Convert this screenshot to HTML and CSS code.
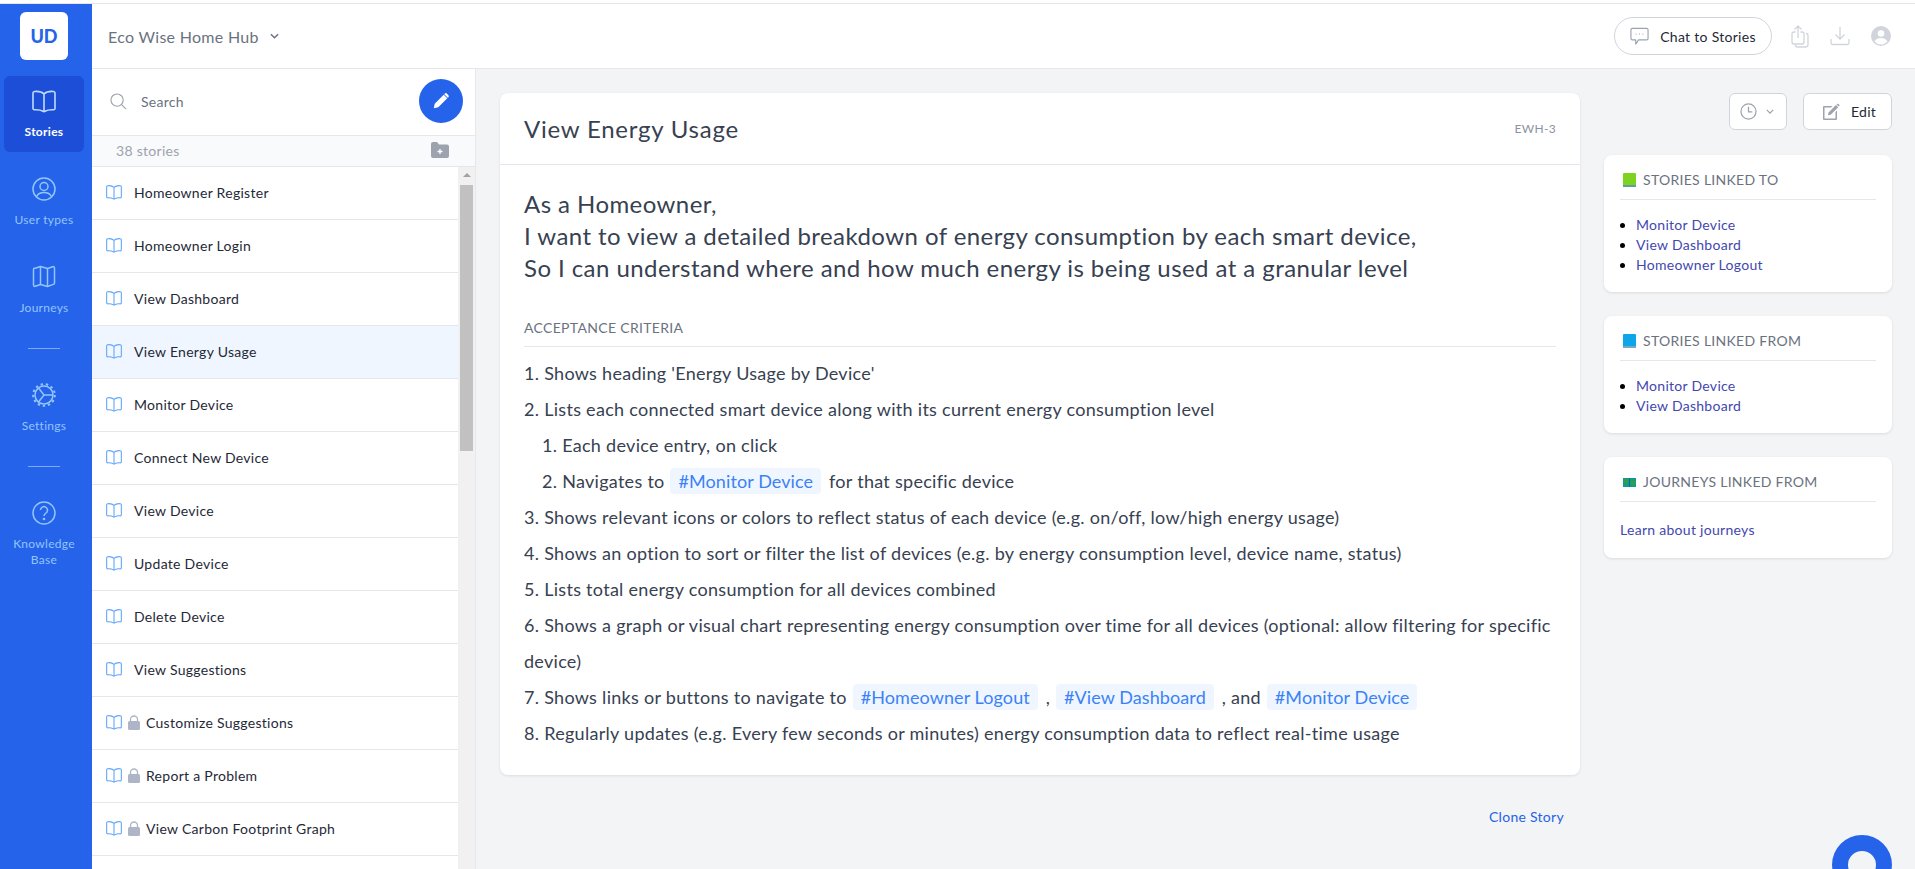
FILE: index.html
```
<!DOCTYPE html>
<html lang="en">
<head>
    <meta charset="UTF-8">
    <meta name="viewport" content="width=device-width, initial-scale=1.0">
    <title>View Energy Usage</title>
    <link rel="stylesheet" href="styles.css">
</head>
<body>
    <svg class="defs" width="0" height="0">
        <symbol id="book" viewBox="0 0 24 24">
            <path d="M12 5C10 3 6 2.200 2.500 2.500 1.600 2.600 1 3.200 1 4v15.500c0 .8.600 1.300 1.500 1.300 3.500-.2 6.500.300 8.500 1.500.6.400 1.400.400 2 0 2-1.200 5-1.700 8.500-1.500.9 0 1.500-.5 1.500-1.300V4c0-.8-.6-1.400-1.500-1.500C18 2.200 14 3 12 5zM12 5v17" fill="none" stroke="currentColor" stroke-width="1.600" stroke-linejoin="round"/>
        </symbol>
    </svg>
    <div class="top-strip"></div>
    <div class="app">
        <!-- rail -->
        <nav class="rail">
            <div class="logo">UD</div>
            <a class="rail-item active">
                <svg class="rail-icon"><use href="#book"/></svg>
                <span>Stories</span>
            </a>
            <a class="rail-item">
                <svg class="rail-icon" viewBox="0 0 24 24" fill="none" stroke="currentColor" stroke-width="1.500"><circle cx="12" cy="12" r="11"/><circle cx="12" cy="9.500" r="4"/><path d="M4.500 19.500c1.500-3 4.500-4 7.500-4s6 1 7.500 4"/></svg>
                <span>User types</span>
            </a>
            <a class="rail-item">
                <svg class="rail-icon" viewBox="0 0 24 24" fill="none" stroke="currentColor" stroke-width="1.500" stroke-linejoin="round"><path d="M1.500 4.500c0-1 .8-1.500 1.700-1.200L8.500 1.500 15.500 3.500l5.300-1.800c.9-.3 1.700.2 1.700 1.200v15c0 .8-.5 1.300-1.200 1.500l-5.800 2.100-7-2-5.300 1.800c-.9.300-1.700-.2-1.700-1.200z"/><path d="M8.500 1.500v18.500M15.500 3.500v18.300"/></svg>
                <span>Journeys</span>
            </a>
            <div class="rail-divider"></div>
            <a class="rail-item">
                <svg class="rail-icon" viewBox="0 0 24 24" fill="none" stroke="currentColor"><circle cx="12" cy="12" r="10.800" stroke-width="2" stroke-dasharray="2.400 2.840"/><circle cx="12" cy="12" r="9" stroke-width="1.500"/><path d="M6.500 5l5.500 7-5.500 7M12 12h9" stroke-width="1.500"/></svg>
                <span>Settings</span>
            </a>
            <div class="rail-divider"></div>
            <a class="rail-item">
                <svg class="rail-icon" viewBox="0 0 24 24" fill="none" stroke="currentColor" stroke-width="1.500"><circle cx="12" cy="12" r="11"/><path d="M8.500 9a3.500 3.500 0 1 1 5.500 3c-1.300.9-2 1.500-2 3"/><circle cx="12" cy="18" r=".6"/></svg>
                <span>Knowledge<br>Base</span>
            </a>
        </nav>

        <div class="page">
            <header class="topbar">
                <div class="project">
                    Eco Wise Home Hub
                    <svg class="chev" viewBox="0 0 10 6" fill="none" stroke="currentColor" stroke-width="1.600"><path d="M1 1l4 4 4-4"/></svg>
                </div>
                <div class="topbar-right">
                    <button class="chat-btn" type="button">
                        <svg viewBox="0 0 20 20" fill="none" stroke="#9ca3af" stroke-width="1.200" stroke-linejoin="round"><path d="M2.500 1.500h15a1.500 1.500 0 0 1 1.500 1.500v9a1.500 1.500 0 0 1-1.500 1.500H9l-3 4.500v-4.500H2.500A1.500 1.500 0 0 1 1 12V3a1.500 1.500 0 0 1 1.500-1.500z"/><path d="M6 7.500h.8M9.600 7.500h.8M13.200 7.500h.8" stroke-width="1.400"/></svg>
                        Chat to Stories
                    </button>
                    <svg class="bar-icon share" viewBox="0 0 18 23" fill="none" stroke="#d1d5db" stroke-width="1.300" stroke-linejoin="round"><path d="M4.500 7H3a2 2 0 0 0-2 2v8a2 2 0 0 0 2 2h8a2 2 0 0 0 2-2V9a2 2 0 0 0-2-2H9.500M7 1v12M3.500 4.500L7 1l3.500 3.500"/><path d="M15 8.500a2 2 0 0 1 2 2v9a2.500 2.500 0 0 1-2.500 2.500h-8a2 2 0 0 1-2-2"/></svg>
                    <svg class="bar-icon download" viewBox="0 0 20 20" fill="none" stroke="#d1d5db" stroke-width="1.300"><path d="M10 1v12M5.500 8.500L10 13l4.500-4.500M1 13v4a1.500 1.500 0 0 0 1.500 1.500h15A1.500 1.500 0 0 0 19 17v-4"/></svg>
                    <svg class="bar-icon user" viewBox="0 0 20 20"><circle cx="10" cy="10" r="10" fill="#d1d5db"/><circle cx="10" cy="7.500" r="3.300" fill="#fff"/><path d="M3.500 15.500c1.200-2.500 3.800-3.500 6.500-3.500s5.300 1 6.500 3.500a8.500 8.500 0 0 1-13 0z" fill="#fff"/></svg>
                </div>
            </header>

            <div class="content">
                <!-- story list -->
                <aside class="stories">
                    <div class="search-row">
                        <svg class="search-icon" viewBox="0 0 18 18" fill="none" stroke="#9ca3af" stroke-width="1.200"><circle cx="7.500" cy="7.500" r="6.500"/><path d="M12.300 12.300L17 17"/></svg>
                        <span class="search-text">Search</span>
                        <button class="fab" type="button">
                            <svg viewBox="0 0 20 20" fill="#fff"><path d="M2 18l1-5L13 3l4 4L7 17zM14.200 1.800a1.600 1.600 0 0 1 2.300 0l1.700 1.700a1.600 1.600 0 0 1 0 2.300l-.6.600-4-4z"/></svg>
                        </button>
                    </div>
                    <div class="count-row">
                        <span>38 stories</span>
                        <svg viewBox="0 0 18 16"><path d="M0 2a2 2 0 0 1 2-2h4l2 2.500h8a2 2 0 0 1 2 2V14a2 2 0 0 1-2 2H2a2 2 0 0 1-2-2z" fill="#9ca3af"/><path d="M9 7v5M6.500 9.500h5" stroke="#fff" stroke-width="1.300"/></svg>
                    </div>
                    <div class="list-wrap">
                        <ul class="story-list">
                            <li><svg class="book"><use href="#book"/></svg>Homeowner Register</li>
                            <li><svg class="book"><use href="#book"/></svg>Homeowner Login</li>
                            <li><svg class="book"><use href="#book"/></svg>View Dashboard</li>
                            <li class="current"><svg class="book"><use href="#book"/></svg>View Energy Usage</li>
                            <li><svg class="book"><use href="#book"/></svg>Monitor Device</li>
                            <li><svg class="book"><use href="#book"/></svg>Connect New Device</li>
                            <li><svg class="book"><use href="#book"/></svg>View Device</li>
                            <li><svg class="book"><use href="#book"/></svg>Update Device</li>
                            <li><svg class="book"><use href="#book"/></svg>Delete Device</li>
                            <li><svg class="book"><use href="#book"/></svg>View Suggestions</li>
                            <li><svg class="book"><use href="#book"/></svg><svg class="lock" viewBox="0 0 12 15"><path d="M2.500 6V4.500a3.500 3.500 0 0 1 7 0V6" fill="none" stroke="#adb5c7" stroke-width="1.300"/><rect y="6" width="12" height="9" rx="1.500" fill="#adb5c7"/></svg>Customize Suggestions</li>
                            <li><svg class="book"><use href="#book"/></svg><svg class="lock" viewBox="0 0 12 15"><path d="M2.500 6V4.500a3.500 3.500 0 0 1 7 0V6" fill="none" stroke="#adb5c7" stroke-width="1.300"/><rect y="6" width="12" height="9" rx="1.500" fill="#adb5c7"/></svg>Report a Problem</li>
                            <li><svg class="book"><use href="#book"/></svg><svg class="lock" viewBox="0 0 12 15"><path d="M2.500 6V4.500a3.500 3.500 0 0 1 7 0V6" fill="none" stroke="#adb5c7" stroke-width="1.300"/><rect y="6" width="12" height="9" rx="1.500" fill="#adb5c7"/></svg>View Carbon Footprint Graph</li>
                        </ul>
                        <div class="scroll-track">
                            <div class="scroll-arrow"></div>
                            <div class="scroll-thumb"></div>
                        </div>
                    </div>
                </aside>

                <!-- story -->
                <main class="main">
                    <div class="main-col">
                        <section class="story-card">
                            <div class="story-head">
                                <h1>View Energy Usage</h1>
                                <span class="story-key">EWH-3</span>
                            </div>
                            <div class="story-body">
                                <p class="story-text">As a Homeowner,<br>I want to view a detailed breakdown of energy consumption by each smart device,<br>So I can understand where and how much energy is being used at a granular level</p>
                                <h2 class="criteria-title">Acceptance Criteria</h2>
                                <ol class="criteria">
                                    <li>Shows heading 'Energy Usage by Device'</li>
                                    <li>Lists each connected smart device along with its current energy consumption level
                                        <ol>
                                            <li>Each device entry, on click</li>
                                            <li>Navigates to <a class="chip">#Monitor Device</a> for that specific device</li>
                                        </ol>
                                    </li>
                                    <li>Shows relevant icons or colors to reflect status of each device (e.g. on/off, low/high energy usage)</li>
                                    <li>Shows an option to sort or filter the list of devices (e.g. by energy consumption level, device name, status)</li>
                                    <li>Lists total energy consumption for all devices combined</li>
                                    <li>Shows a graph or visual chart representing energy consumption over time for all devices (optional: allow filtering for specific device)</li>
                                    <li>Shows links or buttons to navigate to <a class="chip">#Homeowner Logout</a> , <a class="chip">#View Dashboard</a> , and <a class="chip">#Monitor Device</a></li>
                                    <li>Regularly updates (e.g. Every few seconds or minutes) energy consumption data to reflect real-time usage</li>
                                </ol>
                            </div>
                        </section>
                        <a class="clone">Clone Story</a>
                    </div>

                    <div class="side-col">
                        <div class="side-actions">
                            <button class="btn history" type="button">
                                <svg class="clock" viewBox="0 0 18 18" fill="none" stroke="#9ca3af" stroke-width="1.300"><circle cx="9" cy="9" r="8"/><path d="M9 4v5.500h4"/></svg>
                                <svg class="chev small" viewBox="0 0 10 6" fill="none" stroke="#9ca3af" stroke-width="1.600"><path d="M1 1l4 4 4-4"/></svg>
                            </button>
                            <button class="btn edit" type="button">
                                <svg viewBox="0 0 18 18" fill="#9ca3af"><path d="M2 3h8.500L9 4.500H2.500v11h11V9l1.500-1.500V16a1 1 0 0 1-1 1H2a1 1 0 0 1-1-1V4a1 1 0 0 1 1-1z"/><path d="M6.500 9.500L14 2l2.200 2.200-7.500 7.500-2.800.6zM15 1a1 1 0 0 1 1.400 0l.8.800a1 1 0 0 1 0 1.400l-.4.400-2.200-2.200z"/></svg>
                                Edit
                            </button>
                        </div>

                        <section class="side-card">
                            <h3><svg class="emoji" viewBox="0 0 13 14"><rect width="13" height="14" rx="1" fill="#7ed321"/><rect y="12" width="13" height="2" fill="#5f9ea0"/></svg>Stories Linked To</h3>
                            <ul>
                                <li><a>Monitor Device</a></li>
                                <li><a>View Dashboard</a></li>
                                <li><a>Homeowner Logout</a></li>
                            </ul>
                        </section>
                        <section class="side-card">
                            <h3><svg class="emoji" viewBox="0 0 13 14"><rect width="13" height="14" rx="1" fill="#0ea5e9"/><rect y="12" width="13" height="2" fill="#7aa7c7"/></svg>Stories Linked From</h3>
                            <ul>
                                <li><a>Monitor Device</a></li>
                                <li><a>View Dashboard</a></li>
                            </ul>
                        </section>
                        <section class="side-card">
                            <h3><svg class="emoji" viewBox="0 0 13 14"><path d="M0 3h13v9H0z" fill="#0f9d8a"/><path d="M1 4h4v4H1zM8 6h4v4H8z" fill="#3b9b3f"/><path d="M6 3h1v9H6z" fill="#0b6e8e"/></svg>Journeys Linked From</h3>
                            <a class="learn">Learn about journeys</a>
                        </section>
                    </div>
                </main>
            </div>
        </div>
    </div>
    <div class="help-bubble"></div>
</body>
</html>
```

FILE: styles.css
```
* {
    box-sizing: border-box;
}
html, body {
    height: 100%;
}
body {
    margin: 0;
    overflow: hidden;
    font-family: "Lato", "Noto Sans", sans-serif;
    letter-spacing: 0.018em;
    color: #374151;
    background: #fff;
}
.defs {
    display: block;
    height: 0;
}
.top-strip {
    height: 4px;
    border-bottom: 1px solid #e5e7eb;
}
.app {
    display: flex;
    height: 865px;
}

/* rail */
.rail {
    width: 92px;
    flex-shrink: 0;
    background: #2563eb;
    padding: 8px 4px 0 0;
    display: flex;
    flex-direction: column;
    align-items: center;
}
.logo {
    width: 48px;
    height: 48px;
    margin-bottom: 16px;
    border-radius: 6px;
    background: #fff;
    color: #2563eb;
    font-size: 18px;
    font-weight: 900;
    letter-spacing: 0;
    display: flex;
    align-items: center;
    justify-content: center;
}
.rail-item {
    width: 80px;
    min-height: 76px;
    margin-bottom: 12px;
    padding-top: 13px;
    border-radius: 6px;
    color: #93c5fd;
    font-size: 12px;
    line-height: 16px;
    text-align: center;
    display: flex;
    flex-direction: column;
    align-items: center;
    gap: 11px;
}
.rail-item.active {
    background: #1d4ed8;
    color: #fff;
}
.rail-item.active span {
    font-weight: 700;
}
.rail-item.active .rail-icon {
    color: #bfdbfe;
}
.rail-icon {
    width: 24px;
    height: 24px;
    display: block;
}
.rail-divider {
    width: 32px;
    height: 1px;
    margin: 8px 0 21px;
    background: #7fa9f5;
}

/* top bar */
.page {
    flex: 1;
    min-width: 0;
    display: flex;
    flex-direction: column;
}
.topbar {
    height: 65px;
    flex-shrink: 0;
    border-bottom: 1px solid #e5e7eb;
    padding: 0 24px 0 16px;
    display: flex;
    align-items: center;
    justify-content: space-between;
}
.project {
    font-size: 16px;
    color: #6b7280;
    display: flex;
    align-items: center;
    gap: 11px;
}
.chev {
    width: 9px;
    height: 6px;
}
.topbar-right {
    display: flex;
    align-items: center;
}
.chat-btn {
    width: 158px;
    height: 38px;
    margin-right: 19px;
    border: 1px solid #d1d5db;
    border-radius: 19px;
    background: #fff;
    font: inherit;
    letter-spacing: inherit;
    font-size: 14px;
    color: #1f2937;
    display: flex;
    align-items: center;
    justify-content: center;
    gap: 11px;
}
.chat-btn svg {
    width: 19px;
    height: 19px;
}
.share {
    width: 18px;
    height: 23px;
    margin-right: 21px;
}
.download {
    width: 20px;
    height: 20px;
    margin-right: 21px;
}
.user {
    width: 20px;
    height: 20px;
}

.content {
    flex: 1;
    min-height: 0;
    display: flex;
}

/* story list */
.stories {
    width: 384px;
    flex-shrink: 0;
    border-right: 1px solid #e5e7eb;
    display: flex;
    flex-direction: column;
}
.search-row {
    height: 67px;
    flex-shrink: 0;
    border-bottom: 1px solid #e5e7eb;
    padding: 0 12px 2px 18px;
    display: flex;
    align-items: center;
}
.search-icon {
    width: 17px;
    height: 17px;
    margin-right: 14px;
}
.search-text {
    flex: 1;
    font-size: 14px;
    color: #6b7280;
}
.fab {
    width: 44px;
    height: 44px;
    padding: 0;
    border: none;
    border-radius: 50%;
    background: #2563eb;
    display: flex;
    align-items: center;
    justify-content: center;
}
.fab svg {
    width: 18px;
    height: 18px;
}
.count-row {
    height: 31px;
    flex-shrink: 0;
    background: #f9fafb;
    border-bottom: 1px solid #e5e7eb;
    padding: 0 26px 2px 24px;
    font-size: 14px;
    color: #9ca3af;
    display: flex;
    align-items: center;
    justify-content: space-between;
}
.count-row svg {
    width: 18px;
    height: 16px;
}
.list-wrap {
    flex: 1;
    min-height: 0;
    display: flex;
}
.story-list {
    flex: 1;
    margin: 0;
    padding: 0;
    list-style: none;
}
.story-list li {
    height: 53px;
    border-bottom: 1px solid #e5e7eb;
    padding: 0 0 2px 14px;
    font-size: 14px;
    color: #1f2937;
    display: flex;
    align-items: center;
}
.story-list li.current {
    background: #eff6ff;
}
.book {
    width: 16px;
    height: 16px;
    margin-right: 12px;
    color: #60a5fa;
    flex-shrink: 0;
}
.lock {
    width: 12px;
    height: 15px;
    margin: 0 6px 0 -6px;
}
.scroll-track {
    width: 17px;
    flex-shrink: 0;
    background: #f1f1f1;
    padding-top: 6px;
}
.scroll-arrow {
    width: 0;
    height: 0;
    margin: 0 auto 8px;
    border: 4px solid transparent;
    border-top: none;
    border-bottom: 4px solid #a3a3a3;
}
.scroll-thumb {
    width: 13px;
    height: 266px;
    margin: 0 auto;
    background: #c1c1c1;
}

/* story */
.main {
    flex: 1;
    min-width: 0;
    background: #f3f4f6;
    padding: 24px 23px 0 24px;
    display: flex;
    gap: 24px;
}
.main-col {
    flex: 1;
    min-width: 0;
}
.story-card {
    height: 682px;
    border-radius: 8px;
    background: #fff;
    box-shadow: 0 1px 3px rgba(0, 0, 0, 0.1);
}
.story-head {
    height: 72px;
    border-bottom: 1px solid #e5e7eb;
    padding: 0 24px;
    display: flex;
    align-items: center;
    justify-content: space-between;
}
.story-head h1 {
    margin: 0;
    font-size: 24px;
    font-weight: 400;
    letter-spacing: 0.032em;
    color: #374151;
}
.story-key {
    font-size: 12px;
    color: #8b93a3;
}
.story-body {
    padding: 23px 24px 0;
}
.story-text {
    margin: 0;
    font-size: 24px;
    letter-spacing: 0.018em;
    line-height: 32px;
}
.criteria-title {
    margin: 34px 0 0;
    padding-bottom: 8px;
    border-bottom: 1px solid #e5e7eb;
    font-size: 14px;
    font-weight: 400;
    letter-spacing: 0.023em;
    line-height: 20px;
    text-transform: uppercase;
    color: #6b7280;
}
.criteria {
    margin: 8px 0 0;
    padding: 0;
    list-style-position: inside;
    font-size: 18px;
    line-height: 36px;
}
.criteria ol {
    margin: 0;
    padding-left: 18px;
    list-style-position: inside;
}
.chip {
    margin: 0 3px 0 1px;
    padding: 2px 8px;
    border-radius: 4px;
    background: #eff6ff;
    color: #3b82f6;
    letter-spacing: 0.005em;
}
.clone {
    display: block;
    margin-top: 33px;
    padding-right: 16px;
    text-align: right;
    font-size: 14px;
    color: #2563eb;
}

/* right column */
.side-col {
    width: 288px;
    flex-shrink: 0;
}
.side-actions {
    display: flex;
    justify-content: flex-end;
    gap: 16px;
    margin-bottom: 25px;
}
.btn {
    height: 37px;
    border: 1px solid #d1d5db;
    border-radius: 6px;
    background: #fff;
    font: inherit;
    letter-spacing: inherit;
    font-size: 14px;
    color: #1f2937;
    display: flex;
    align-items: center;
}
.btn.history {
    width: 58px;
    padding: 0 0 0 10px;
    gap: 9px;
}
.clock {
    width: 17px;
    height: 17px;
}
.chev.small {
    width: 8px;
    height: 5px;
}
.btn.edit {
    width: 89px;
    padding: 0 0 0 18px;
    gap: 11px;
}
.btn.edit svg {
    width: 18px;
    height: 18px;
}
.side-card {
    margin-bottom: 24px;
    padding: 15px 16px 0;
    border-radius: 8px;
    background: #fff;
    box-shadow: 0 1px 3px rgba(0, 0, 0, 0.1);
    font-size: 14px;
    line-height: 20px;
}
.side-card h3 {
    margin: 0;
    padding: 0 0 9px 3px;
    border-bottom: 1px solid #e5e7eb;
    font-size: 14px;
    font-weight: 400;
    text-transform: uppercase;
    color: #6b7280;
    display: flex;
    align-items: center;
}
.emoji {
    width: 13px;
    height: 14px;
    margin-right: 7px;
}
.side-card ul {
    margin: 0;
    padding: 15px 0 17px 16px;
    color: #000;
}
.side-card a {
    color: #4347b0;
}
.learn {
    display: block;
    padding: 18px 0;
}
.help-bubble {
    position: fixed;
    left: 1832px;
    top: 835px;
    width: 60px;
    height: 60px;
    border: 16px solid #2563eb;
    border-radius: 50%;
    background: #f3f4f6;
}
```
